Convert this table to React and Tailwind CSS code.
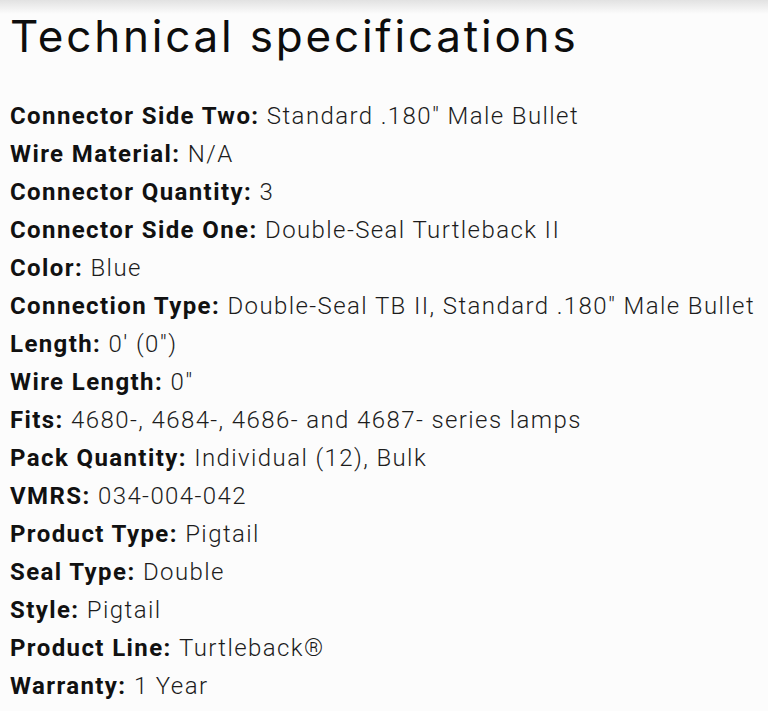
const specs = [
  ["Connector Side Two", 'Standard .180" Male Bullet'],
  ["Wire Material", "N/A"],
  ["Connector Quantity", "3"],
  ["Connector Side One", "Double-Seal Turtleback II"],
  ["Color", "Blue"],
  ["Connection Type", 'Double-Seal TB II, Standard .180" Male Bullet'],
  ["Length", "0' (0\")"],
  ["Wire Length", '0"'],
  ["Fits", "4680-, 4684-, 4686- and 4687- series lamps"],
  ["Pack Quantity", "Individual (12), Bulk"],
  ["VMRS", "034-004-042"],
  ["Product Type", "Pigtail"],
  ["Seal Type", "Double"],
  ["Style", "Pigtail"],
  ["Product Line", "Turtleback®"],
  ["Warranty", "1 Year"],
];

export default function App() {
  return (
    <div className="min-h-[711px] bg-[#fcfcfc] bg-gradient-to-b from-[#e2e2e2] to-[#fcfcfc] bg-[length:100%_14px] bg-no-repeat px-[10px] pt-[8px]">
      <h2 className="font-['Inter',sans-serif] text-[44px] leading-[56px] font-normal text-[#0d0d0d] tracking-[2.8px]">
        Technical specifications
      </h2>
      <ul className="mt-[33px] font-['Roboto',sans-serif] text-[24px] leading-[38px] tracking-[1.4px] text-[#1c1c1c]">
        {specs.map(([label, value]) => (
          <li key={label} className="whitespace-nowrap">
            <span className="font-bold text-[#111]">{label}:</span>{" "}
            <span className="font-light">{value}</span>
          </li>
        ))}
      </ul>
    </div>
  );
}
